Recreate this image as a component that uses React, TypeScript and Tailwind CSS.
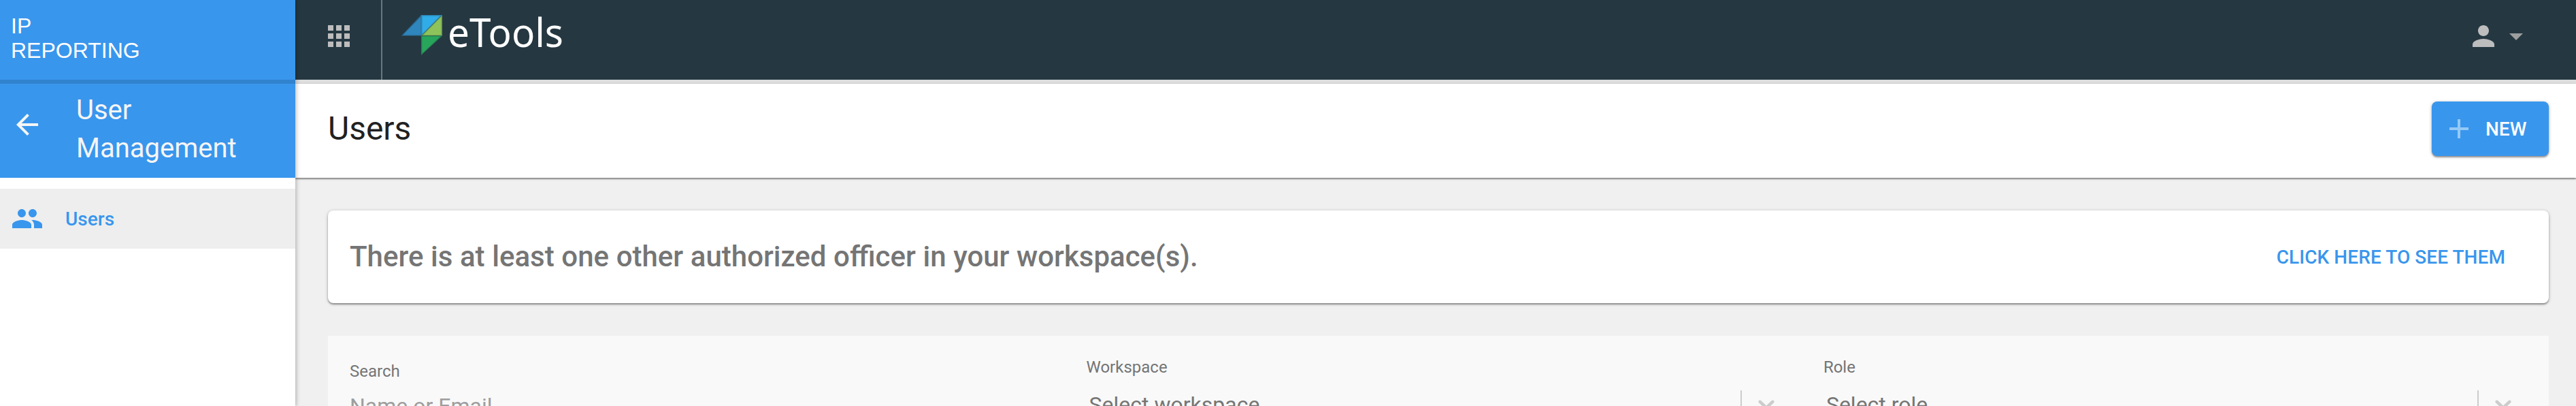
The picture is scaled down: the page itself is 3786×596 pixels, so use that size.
import type { ReactNode } from "react";

function Icon({ d, className }: { d: string; className: string }) {
  return (
    <svg viewBox="0 0 24 24" className={`block size-12 shrink-0 ${className}`} fill="currentColor">
      <path d={d} />
    </svg>
  );
}

const ARROW_BACK = "M20 11H7.83l5.59-5.59L12 4l-8 8 8 8 1.41-1.41L7.83 13H20v-2z";
const PEOPLE =
  "M16 11c1.66 0 2.99-1.34 2.99-3S17.66 5 16 5c-1.66 0-3 1.34-3 3s1.34 3 3 3zm-8 0c1.66 0 2.99-1.34 2.99-3S9.66 5 8 5C6.34 5 5 6.34 5 8s1.34 3 3 3zm0 2c-2.33 0-7 1.17-7 3.5V19h14v-2.5c0-2.33-4.67-3.5-7-3.5zm8 0c-.29 0-.62.02-.97.05 1.16.84 1.97 1.97 1.97 3.45V19h6v-2.5c0-2.33-4.67-3.5-7-3.5z";
const APPS =
  "M4 8h4V4H4v4zm6 12h4v-4h-4v4zm-6 0h4v-4H4v4zm0-6h4v-4H4v4zm6 0h4v-4h-4v4zm6-10v4h4V4h-4zm-6 4h4V4h-4v4zm6 6h4v-4h-4v4zm0 6h4v-4h-4v4z";
const PERSON =
  "M12 12c2.21 0 4-1.79 4-4s-1.79-4-4-4-4 1.79-4 4 1.79 4 4 4zm0 2c-2.67 0-8 1.34-8 4v2h16v-2c0-2.66-5.33-4-8-4z";
const CARET = "M7 10l5 5 5-5z";
const PLUS = "M19 13h-6v6h-2v-6H5v-2h6V5h2v6h6v2z";

function Logo() {
  return (
    <svg className="ml-[26px] mt-2 block h-[88px] w-[260px] shrink-0" viewBox="588 8 260 88">
      <path d="M590 52.5 619 22v30.5z" fill="#2e86bd" />
      <path d="M619 22h31l-31 30.5z" fill="#30ace8" />
      <path d="M650 22v30.5h-31z" fill="#8dc35a" />
      <path d="M619 52.5h31L619 81z" fill="#27a65b" />
      <path
        d="M590 52.5h59.5V22.5h-30L590 52.5M619.5 22v58.5l30-28M619.5 52.5 649.5 22"
        fill="none"
        stroke="#253842"
        strokeOpacity=".35"
        strokeWidth="2"
      />
      <text
        x="658"
        y="69"
        textLength="170"
        lengthAdjust="spacingAndGlyphs"
        className="fill-white font-['Noto_Sans',sans-serif] text-[58px]"
      >
        eTools
      </text>
    </svg>
  );
}

function Sidebar() {
  return (
    <aside className="relative z-10 flex w-[434px] shrink-0 flex-col bg-white shadow-[2px_0_4px_rgba(0,0,0,0.14),2px_0_8px_rgba(0,0,0,0.1)]">
      <div className="h-[123px] border-b-[6px] border-[#3183cd] bg-[#3996ed] pl-4 pt-5 font-['Liberation_Sans',Arial,sans-serif] text-[32px] leading-9 text-white">
        IP
        <br />
        REPORTING
      </div>
      <div className="flex h-[138px] bg-[#3996ed] pl-4 text-[#f5f5f5]">
        <Icon d={ARROW_BACK} className="mt-9" />
        <h2 className="ml-12 mt-[11px] text-[40px] leading-[56px]">
          User
          <br />
          Management
        </h2>
      </div>
      <nav className="mt-4 flex h-22 items-center bg-[#eeeeee] pl-4 text-[#3996ed]">
        <Icon d={PEOPLE} className="" />
        <span className="ml-8 mt-px text-[28px] font-medium leading-[33px]">Users</span>
      </nav>
    </aside>
  );
}

function TopBar() {
  return (
    <header className="flex h-[123px] border-b-[6px] border-[#dedede] bg-[#253842] text-[#bdbdbd]">
      <div className="flex w-32 border-r-2 border-[#69777e] pl-10">
        <Icon d={APPS} className="mt-[29px]" />
      </div>
      <Logo />
      <div className="ml-auto mr-16 mt-[29px] flex">
        <Icon d={PERSON} className="" />
        <Icon d={CARET} className="text-[#9e9e9e]" />
      </div>
    </header>
  );
}

function Select({ label, children }: { label: string; children: ReactNode }) {
  return (
    <div className="w-[1083.4px] shrink-0">
      <div className="mt-8 text-2xl leading-7 text-[#757575]">{label}</div>
      <div className="mt-5 flex h-14">
        <span className="ml-1 mt-[3px] text-[32px] leading-9 text-[#757575]">{children}</span>
        <div className="ml-auto mr-16 flex border-l-2 border-[#cccccc] pl-4">
          <svg viewBox="0 0 20 20" className="block size-10 text-[#cccccc]" fill="currentColor">
            <path d="M4.516 7.548c.436-.446 1.043-.481 1.576 0L10 11.295l3.908-3.747c.533-.481 1.141-.446 1.574 0 .436.445.408 1.197 0 1.615-.406.418-4.695 4.502-4.695 4.502a1.095 1.095 0 0 1-1.576 0S4.924 9.581 4.516 9.163s-.436-1.170 0-1.615z" />
          </svg>
        </div>
      </div>
    </div>
  );
}

export default function App() {
  return (
    <div className="flex h-[596px] w-full overflow-hidden bg-[#f0f0f0] font-[Roboto,sans-serif]">
      <Sidebar />
      <div className="min-w-0 flex-1">
        <TopBar />
        <section className="flex h-[138px] justify-between bg-white pl-12 pr-10 shadow-[0_2px_2px_rgba(0,0,0,0.3),0_1px_3px_rgba(0,0,0,0.3)]">
          <h1 className="mt-[37px] text-[48px] leading-[57px] text-[#212121]">Users</h1>
          <button className="mt-[26px] flex h-20 w-[172px] items-center rounded-lg bg-[#3996ed] pl-4 text-[28px] font-medium text-white shadow-[0_2px_2px_rgba(0,0,0,0.3),0_1px_5px_rgba(0,0,0,0.25)]">
            <Icon d={PLUS} className="text-[#95caf6]" />
            <span className="ml-[15px] mt-px leading-[33px]">NEW</span>
          </button>
        </section>
        <section className="ml-12 mr-10 mt-12 flex h-[136px] items-center justify-between rounded-lg bg-white pl-8 pr-16 shadow-[0_2px_2px_rgba(0,0,0,0.3),0_1px_5px_rgba(0,0,0,0.25)]">
          <p className="mb-px text-[42px] font-medium leading-[49px] text-[#757575] [word-spacing:0.2px]">
            There is at least one other authorized officer in your workspace(s).
          </p>
          <a className="mt-px text-[28px] font-medium leading-[33px] tracking-[0.07px] text-[#3996ed]">
            CLICK HERE TO SEE THEM
          </a>
        </section>
        <section className="ml-12 mr-10 mt-12 flex h-[103px] overflow-hidden bg-[#f9f9f9] pl-8">
          <div className="w-[1082.5px] shrink-0">
            <div className="mt-[38px] text-2xl leading-7 text-[#757575]">Search</div>
            <div className="mt-[19px] text-[32px] leading-9 text-[#9e9e9e]">Name or Email</div>
          </div>
          <Select label="Workspace">Select workspace</Select>
          <Select label="Role">Select role</Select>
        </section>
      </div>
    </div>
  );
}
